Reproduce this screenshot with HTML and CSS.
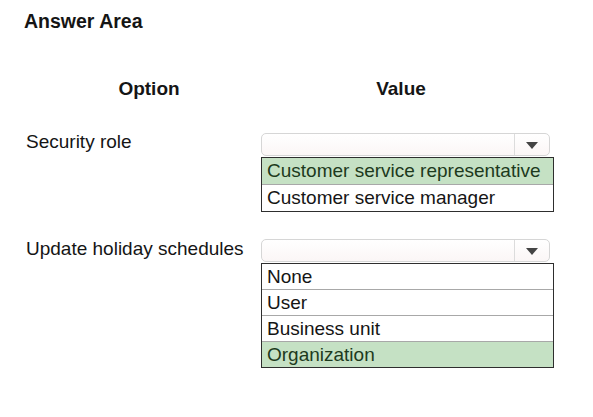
FILE: index.html
```html
<!DOCTYPE html>
<html lang="en">
    <head>
        <meta charset="UTF-8" />
        <meta name="viewport" content="width=device-width, initial-scale=1.0" />
        <title>Answer Area</title>
        <link rel="stylesheet" href="styles.css">
    </head>
    <body>
        <div class="answer-area">
            <h1 class="title">Answer Area</h1>

            <div class="head">
                <div class="head-option">Option</div>
                <div class="head-value">Value</div>
            </div>

            <div class="row">
                <div class="label">Security role</div>
                <div class="value">
                    <div class="select">
                        <span class="select-btn"><span class="arrow"></span></span>
                    </div>
                    <ul class="options">
                        <li class="picked">Customer service representative</li>
                        <li>Customer service manager</li>
                    </ul>
                </div>
            </div>

            <div class="row second">
                <div class="label">Update holiday schedules</div>
                <div class="value">
                    <div class="select">
                        <span class="select-btn"><span class="arrow"></span></span>
                    </div>
                    <ul class="options short">
                        <li>None</li>
                        <li>User</li>
                        <li>Business unit</li>
                        <li class="picked">Organization</li>
                    </ul>
                </div>
            </div>
        </div>
    </body>
</html>
```

FILE: styles.css
```css
body,
html {
    margin: 0;
    padding: 0;
    background: #ffffff;
}

body {
    font-family: "Liberation Sans", Arial, sans-serif;
    color: #151515;
}

.answer-area {
    padding: 10px 0 0 26px;
}

.title {
    margin: 0 0 0 -2px;
    font-size: 19.5px;
    line-height: 22px;
    font-weight: bold;
}

.head {
    display: flex;
    margin-top: 46px;
    font-size: 19px;
    line-height: 22px;
    font-weight: bold;
}

.head-option {
    width: 235px;
    padding-left: 11px;
    box-sizing: border-box;
    text-align: center;
}

.head-value {
    width: 292px;
    padding-right: 12px;
    box-sizing: border-box;
    text-align: center;
}

.row {
    display: flex;
    align-items: flex-start;
    margin-top: 33px;
}

.row.second {
    margin-top: 27px;
}

.label {
    width: 235px;
    font-size: 19px;
    line-height: 18px;
}

.second .label {
    line-height: 20px;
}

.value {
    width: 292px;
}

.select {
    display: flex;
    justify-content: flex-end;
    width: 289px;
    height: 23px;
    box-sizing: border-box;
    border: 1px solid #d6d6d6;
    border-radius: 5px;
    background: linear-gradient(to bottom, #ffffff, #fbf6f6);
}

.select-btn {
    display: flex;
    align-items: center;
    justify-content: center;
    width: 34px;
    border-left: 1px solid #dcdcdc;
}

.arrow {
    width: 0;
    height: 0;
    border-left: 6px solid transparent;
    border-right: 6px solid transparent;
    border-top: 7px solid #444444;
    margin-top: 1px;
}

.options {
    list-style: none;
    margin: 1px 0 0;
    padding: 0;
    width: 293px;
    box-sizing: border-box;
    border: 1px solid #2e2e2e;
    font-size: 19px;
}

.options li {
    height: 26px;
    line-height: 26px;
    padding-left: 5px;
    white-space: nowrap;
}

.options li + li {
    border-top: 1px solid #a8a8a8;
}

.options.short li {
    height: 25px;
    line-height: 25px;
}

.options li.picked {
    background: #c5e1c4;
    color: #1d3a1d;
}
```
